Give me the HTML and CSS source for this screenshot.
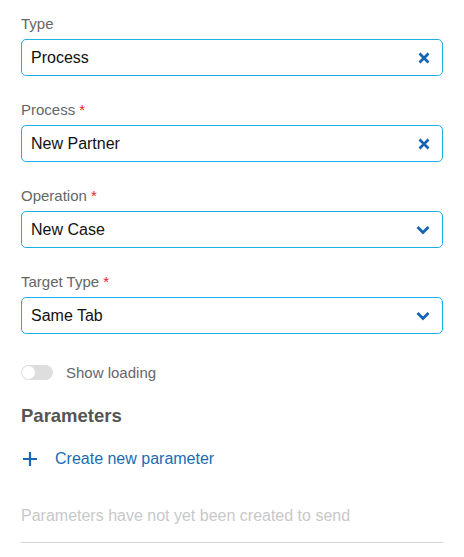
FILE: index.html
```html
<!DOCTYPE html>
<html>
<head>
<meta charset="utf-8">
<link rel="stylesheet" href="styles.css">
</head>
<body>
<div class="form">
  <div class="field">
    <label class="label">Type</label>
    <div class="input">
      <span class="value">Process</span>
      <svg class="icon" viewBox="0 0 12 12" width="12" height="12"><path d="M1.5 1.5 L10.5 10.5 M10.5 1.5 L1.5 10.5" stroke="#1565b3" stroke-width="2.8" fill="none"/></svg>
    </div>
  </div>
  <div class="field">
    <label class="label">Process <span class="req">*</span></label>
    <div class="input">
      <span class="value">New Partner</span>
      <svg class="icon" viewBox="0 0 12 12" width="12" height="12"><path d="M1.5 1.5 L10.5 10.5 M10.5 1.5 L1.5 10.5" stroke="#1565b3" stroke-width="2.8" fill="none"/></svg>
    </div>
  </div>
  <div class="field">
    <label class="label">Operation <span class="req">*</span></label>
    <div class="input">
      <span class="value">New Case</span>
      <svg class="icon" viewBox="0 0 14 10" width="14" height="10"><path d="M1.5 2 L7 7.5 L12.5 2" stroke="#1565b3" stroke-width="2.8" fill="none"/></svg>
    </div>
  </div>
  <div class="field">
    <label class="label">Target Type <span class="req">*</span></label>
    <div class="input">
      <span class="value">Same Tab</span>
      <svg class="icon" viewBox="0 0 14 10" width="14" height="10"><path d="M1.5 2 L7 7.5 L12.5 2" stroke="#1565b3" stroke-width="2.8" fill="none"/></svg>
    </div>
  </div>
  <div class="toggle-row">
    <span class="toggle"><span class="knob"></span></span>
    <span class="toggle-label">Show loading</span>
  </div>
  <h2 class="heading">Parameters</h2>
  <div class="create">
    <svg class="plus" viewBox="0 0 16 16" width="16" height="16"><path d="M8 1 V15 M1 8 H15" stroke="#1a68b4" stroke-width="2.2" fill="none"/></svg>
    <span>Create new parameter</span>
  </div>
  <div class="empty">Parameters have not yet been created to send</div>
</div>
</body>
</html>
```
FILE: styles.css
```css
html, body {
  margin: 0;
  padding: 0;
  background: #fff;
}
body {
  font-family: "Liberation Sans", Arial, sans-serif;
}
.form {
  padding: 16px 21px 0 21px;
  width: 422px;
}
.field {
  margin-bottom: 26px;
}
.field:nth-child(4) {
  margin-bottom: 28px;
}
.label {
  display: block;
  font-size: 15px;
  line-height: 16px;
  color: #666;
  margin-bottom: 7px;
}
.req {
  color: #e5202b;
}
.input {
  box-sizing: border-box;
  height: 37px;
  border: 1px solid #1eb0e6;
  border-radius: 5px;
  display: flex;
  align-items: center;
  justify-content: space-between;
  padding: 0 12px 0 9px;
}
.value {
  font-size: 16px;
  color: #111;
}
.icon {
  display: block;
}
.toggle-row {
  display: flex;
  align-items: center;
  height: 20px;
  gap: 13px;
}
.toggle {
  position: relative;
  width: 32px;
  height: 15px;
  border-radius: 8px;
  background: #dedede;
}
.knob {
  position: absolute;
  left: 1px;
  top: 1px;
  width: 13px;
  height: 13px;
  border-radius: 50%;
  background: #fff;
}
.toggle-label {
  font-size: 15px;
  color: #666;
}
.heading {
  margin: 23px 0 0 0;
  font-size: 18.5px;
  line-height: 22px;
  font-weight: bold;
  color: #555;
}
.create {
  margin-top: 22px;
  display: flex;
  align-items: center;
  height: 20px;
  gap: 17px;
  font-size: 16px;
  color: #1a6bb5;
}
.plus {
  display: block;
  margin-left: 1px;
}
.empty {
  margin-top: 37px;
  font-size: 16px;
  line-height: 20px;
  color: #c8c8c8;
  padding-bottom: 16px;
  border-bottom: 1px solid #d6d6d6;
}
```
